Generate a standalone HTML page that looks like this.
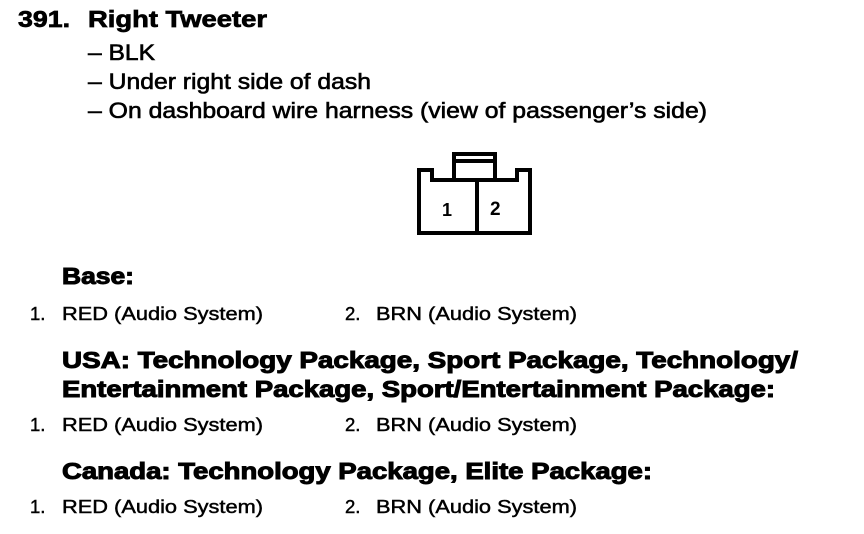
<!DOCTYPE html>
<html><head><meta charset="utf-8"><style>
html,body{margin:0;padding:0;background:#fff;width:864px;height:534px;overflow:hidden}
svg{display:block}
text{font-family:"Liberation Sans",Arial,sans-serif;fill:#000}
.t{font-weight:bold;font-size:23px;stroke:#000;stroke-width:0.7px}
.h{font-weight:bold;font-size:23px;stroke:#000;stroke-width:1px}
.d{font-size:22px;stroke:#000;stroke-width:0.6px}
.r{font-size:18.5px;stroke:#000;stroke-width:0.45px}
</style></head><body>
<svg width="864" height="534" viewBox="0 0 864 534">
<text class="t" x="18" y="27" textLength="52" lengthAdjust="spacingAndGlyphs">391.</text>
<text class="t" x="88" y="27" textLength="179" lengthAdjust="spacingAndGlyphs">Right Tweeter</text>
<text class="d" x="88" y="60" textLength="67" lengthAdjust="spacingAndGlyphs">– BLK</text>
<text class="d" x="88" y="89" textLength="283" lengthAdjust="spacingAndGlyphs">– Under right side of dash</text>
<text class="d" x="88" y="118" textLength="619" lengthAdjust="spacingAndGlyphs">– On dashboard wire harness (view of passenger’s side)</text>

<g fill="none" stroke="#000" stroke-width="4">
<path d="M419,170 H432 V180 H517 V170 H530 V233 H419 Z"/>
<path d="M454,180 V154 H495 V180"/>
<path d="M454,161 H495"/>
<path d="M477,180 V233"/>
</g>
<text x="442" y="216" style="font-weight:bold;font-size:18px">1</text>
<text x="490" y="215" style="font-weight:bold;font-size:19px">2</text>

<text class="h" x="62" y="284" textLength="72" lengthAdjust="spacingAndGlyphs">Base:</text>
<text class="r" x="30" y="320">1.</text>
<text class="r" x="62" y="320" textLength="201" lengthAdjust="spacingAndGlyphs">RED (Audio System)</text>
<text class="r" x="345" y="320">2.</text>
<text class="r" x="376" y="320" textLength="201" lengthAdjust="spacingAndGlyphs">BRN (Audio System)</text>

<text class="h" x="62" y="368" textLength="736" lengthAdjust="spacingAndGlyphs">USA: Technology Package, Sport Package, Technology/</text>
<text class="h" x="62" y="397" textLength="713" lengthAdjust="spacingAndGlyphs">Entertainment Package, Sport/Entertainment Package:</text>
<text class="r" x="30" y="431">1.</text>
<text class="r" x="62" y="431" textLength="201" lengthAdjust="spacingAndGlyphs">RED (Audio System)</text>
<text class="r" x="345" y="431">2.</text>
<text class="r" x="376" y="431" textLength="201" lengthAdjust="spacingAndGlyphs">BRN (Audio System)</text>

<text class="h" x="62" y="479" textLength="590" lengthAdjust="spacingAndGlyphs">Canada: Technology Package, Elite Package:</text>
<text class="r" x="30" y="513">1.</text>
<text class="r" x="62" y="513" textLength="201" lengthAdjust="spacingAndGlyphs">RED (Audio System)</text>
<text class="r" x="345" y="513">2.</text>
<text class="r" x="376" y="513" textLength="201" lengthAdjust="spacingAndGlyphs">BRN (Audio System)</text>
</svg>
</body></html>
